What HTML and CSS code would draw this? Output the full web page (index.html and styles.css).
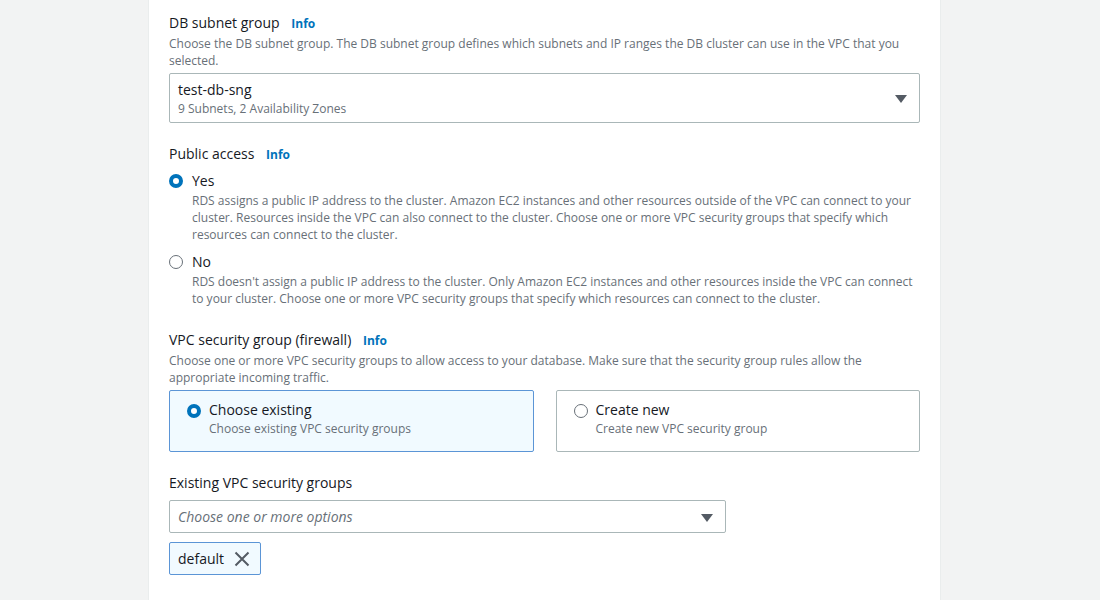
FILE: index.html
```html
<!DOCTYPE html>
<html lang="en">
<head>
  <meta charset="UTF-8" />
  <title>Connectivity</title>
  <link rel="stylesheet" href="styles.css">
</head>
<body>
  <div class="panel">

    <div class="field">
      <div class="label">DB subnet group <a class="info">Info</a></div>
      <div class="desc">Choose the DB subnet group. The DB subnet group defines which subnets and IP ranges the DB cluster can use in the VPC that you selected.</div>
      <div class="select tall">
        <div>
          <div class="select-value">test-db-sng</div>
          <div class="select-sub">9 Subnets, 2 Availability Zones</div>
        </div>
        <span class="caret"></span>
      </div>
    </div>

    <div class="field access">
      <div class="label">Public access <a class="info">Info</a></div>
      <div class="radio-row first">
        <span class="radio checked"></span>
        <span class="radio-label">Yes</span>
      </div>
      <div class="radio-desc">RDS assigns a public IP address to the cluster. Amazon EC2 instances and other resources outside of the VPC can connect to your cluster. Resources inside the VPC can also connect to the cluster. Choose one or more VPC security groups that specify which resources can connect to the cluster.</div>
      <div class="radio-row">
        <span class="radio"></span>
        <span class="radio-label">No</span>
      </div>
      <div class="radio-desc">RDS doesn't assign a public IP address to the cluster. Only Amazon EC2 instances and other resources inside the VPC can connect to your cluster. Choose one or more VPC security groups that specify which resources can connect to the cluster.</div>
    </div>

    <div class="field">
      <div class="label">VPC security group (firewall) <a class="info">Info</a></div>
      <div class="desc">Choose one or more VPC security groups to allow access to your database. Make sure that the security group rules allow the appropriate incoming traffic.</div>
      <div class="tiles">
        <div class="tile selected">
          <span class="radio checked"></span>
          <div>
            <div class="tile-title">Choose existing</div>
            <div class="tile-sub">Choose existing VPC security groups</div>
          </div>
        </div>
        <div class="tile">
          <span class="radio"></span>
          <div>
            <div class="tile-title">Create new</div>
            <div class="tile-sub">Create new VPC security group</div>
          </div>
        </div>
      </div>
    </div>

    <div class="field">
      <div class="label">Existing VPC security groups</div>
      <div class="select multi">
        <span class="placeholder">Choose one or more options</span>
        <span class="caret"></span>
      </div>
      <div class="token">
        <span>default</span>
        <svg class="token-x" width="16" height="16" viewBox="0 0 16 16">
          <path d="M1.5 1.5 L14.5 14.5 M14.5 1.5 L1.5 14.5" stroke="#545b64" stroke-width="2" fill="none"/>
        </svg>
      </div>
    </div>

  </div>
</body>
</html>
```

FILE: styles.css
```css
body {
  margin: 0;
  background-color: #f2f3f3;
  font-family: 'Open Sans', 'Noto Sans', sans-serif;
  color: #16191f;
}

.panel {
  margin-left: 148px;
  width: 751px;
  min-height: 600px;
  padding: 12px 20px 0;
  background-color: #ffffff;
  border-left: 1px solid #eaeded;
  border-right: 1px solid #eaeded;
}

.field {
  margin-bottom: 20px;
}

.field.access {
  margin-bottom: 22px;
}

.label {
  font-size: 14px;
  line-height: 22px;
}

.info {
  margin-left: 8px;
  font-size: 12px;
  font-weight: bold;
  color: #0073bb;
}

.desc {
  font-size: 12px;
  line-height: 17px;
  color: #687078;
}

.select {
  display: flex;
  align-items: center;
  justify-content: space-between;
  margin-top: 4px;
  padding: 0 12px 0 8px;
  border: 1px solid #aab7b8;
  border-radius: 2px;
  background-color: #ffffff;
}

.select.tall {
  height: 48px;
}

.select-value {
  font-size: 14px;
  line-height: 20px;
}

.select-sub {
  font-size: 12px;
  line-height: 17px;
  color: #687078;
}

.caret {
  width: 0;
  height: 0;
  border-left: 6px solid transparent;
  border-right: 6px solid transparent;
  border-top: 8px solid #545b64;
  margin-top: 2px;
}

.radio-row {
  display: flex;
  align-items: center;
  gap: 9px;
  margin-top: 8px;
  line-height: 22px;
}

.radio-row.first {
  margin-top: 4px;
}

.radio {
  box-sizing: border-box;
  flex: none;
  width: 14px;
  height: 14px;
  border-radius: 50%;
  border: 1.5px solid #687078;
  background-color: #ffffff;
}

.radio.checked {
  border: 4px solid #0073bb;
}

.radio-label {
  font-size: 14px;
}

.radio-desc {
  padding-left: 23px;
  font-size: 12px;
  line-height: 17px;
  color: #687078;
}

.tiles {
  display: grid;
  grid-template-columns: 1fr 1fr;
  gap: 22px;
  margin-top: 4px;
}

.tile {
  display: flex;
  align-items: flex-start;
  gap: 8px;
  height: 60px;
  padding: 0 17px;
  border: 1px solid #aab7b8;
  border-radius: 2px;
}

.tile .radio {
  margin-top: 13px;
}

.tile > div {
  padding-top: 9px;
}

.tile.selected {
  background-color: #f1faff;
  border-color: #5b95d6;
}

.tile-title {
  font-size: 14px;
  line-height: 20px;
}

.tile-sub {
  font-size: 12px;
  line-height: 18px;
  color: #687078;
}

.select.multi {
  width: 535px;
  height: 31px;
  margin-top: 6px;
}

.placeholder {
  font-size: 14px;
  font-style: italic;
  color: #687078;
}

.token {
  display: inline-flex;
  align-items: center;
  gap: 10px;
  height: 31px;
  margin-top: 9px;
  padding: 0 10px 0 8px;
  font-size: 14px;
  background-color: #f1faff;
  border: 1px solid #5b95d6;
  border-radius: 2px;
}

.token-x {
  display: block;
}
```
